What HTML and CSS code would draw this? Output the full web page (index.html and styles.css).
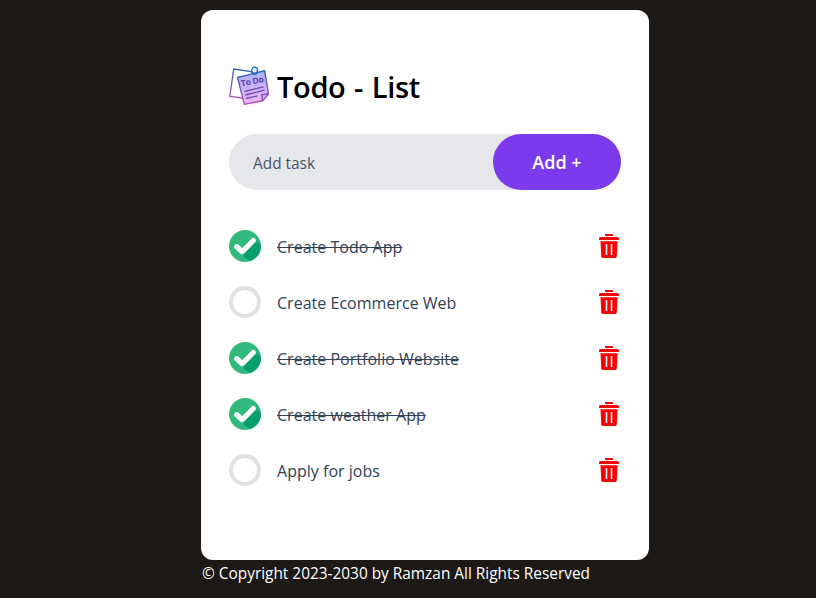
FILE: index.html
```html
<!DOCTYPE html>
<html lang="en">
<head>
<meta charset="utf-8">
<title>Todo - List</title>
<link rel="stylesheet" href="styles.css">
</head>
<body>
<svg class="defs" aria-hidden="true">
  <defs>
    <clipPath id="disc"><circle cx="16" cy="16" r="16"/></clipPath>
    <symbol id="checked" viewBox="0 0 32 32">
      <circle cx="16" cy="16" r="16" fill="#32ba7c"/>
      <path clip-path="url(#disc)" fill="#0aa06e" d="M12.300 23.500 26 9.200 34 17V34H22.500z"/>
      <path d="M7.700 16.700 13.300 21.700 24.300 10.500" fill="none" stroke="#fff" stroke-width="5.200" stroke-linecap="round" stroke-linejoin="round"/>
    </symbol>
    <symbol id="unchecked" viewBox="0 0 32 32">
      <circle cx="16" cy="16" r="14" fill="#fff" stroke="#e1e1e1" stroke-width="4"/>
    </symbol>
    <symbol id="trash" viewBox="0 0 20 26">
      <path fill="#f00" fill-rule="evenodd" d="M6 1h8v2H6zM1.500 4h17q1.500 0 1.500 1.500V7H0V5.500Q0 4 1.500 4zM1.500 8.300h17L17.700 23.800q-.1 1.300-1.600 1.300H3.900q-1.500 0-1.600-1.300zM6.700 11v11h1.600V11zM11.700 11v11h1.600V11z"/>
    </symbol>
  </defs>
</svg>
<main class="card">
  <header class="heading">
    <svg class="logo" viewBox="0 0 40 40">
      <defs>
        <linearGradient id="ink" x1="0" y1="0" x2="0" y2="1"><stop offset="0" stop-color="#2468b2"/><stop offset="1" stop-color="#b84cc0"/></linearGradient>
        <linearGradient id="paper" x1="0" y1="0" x2="0" y2="1"><stop offset="0" stop-color="#a9b0fa"/><stop offset="1" stop-color="#efb5f7"/></linearGradient>
      </defs>
      <path d="M4.800 3 28 6.500 24 34 .8 30.200z" fill="#fff" stroke="url(#ink)" stroke-width="1.300"/>
      <path d="M8.500 11.500 35.600 4.700 39.500 28 33.800 34.700 15.400 38.400z" fill="url(#paper)" stroke="url(#ink)" stroke-width="1.400" stroke-linejoin="round"/>
      <path d="M33.800 34.500 32.700 28.800 39 27.800M15.500 25.500 34.500 20.800M16.200 29 35.500 24.200M17 32.500 28.500 29.800" fill="none" stroke="#7046b4" stroke-width="1.300"/>
      <circle cx="25.600" cy="4.200" r="3" fill="#d5e9ff" stroke="#2468b2" stroke-width="1.200"/>
      <path d="M22.500 6.500q3 3.800 6.200-.2" fill="none" stroke="#2468b2" stroke-width="1.300"/>
      <text x="12.500" y="20.500" transform="rotate(-11 12.500 20.500)" class="logo-text">To Do</text>
    </svg>
    <h1 class="title">Todo - List</h1>
  </header>
  <form class="entry">
    <input class="field" type="text" placeholder="Add task">
    <button class="add" type="button">Add +</button>
  </form>
  <ul class="tasks">
    <li class="task"><svg class="mark"><use href="#checked"/></svg><span class="label done">Create Todo App</span><svg class="bin"><use href="#trash"/></svg></li>
    <li class="task"><svg class="mark"><use href="#unchecked"/></svg><span class="label">Create Ecommerce Web</span><svg class="bin"><use href="#trash"/></svg></li>
    <li class="task"><svg class="mark"><use href="#checked"/></svg><span class="label done">Create Portfolio Website</span><svg class="bin"><use href="#trash"/></svg></li>
    <li class="task"><svg class="mark"><use href="#checked"/></svg><span class="label done">Create weather App</span><svg class="bin"><use href="#trash"/></svg></li>
    <li class="task"><svg class="mark"><use href="#unchecked"/></svg><span class="label">Apply for jobs</span><svg class="bin"><use href="#trash"/></svg></li>
  </ul>
</main>
<footer class="copyright">© Copyright 2023-2030 by Ramzan All Rights Reserved</footer>
</body>
</html>
```
FILE: styles.css
```css
* { box-sizing: border-box; margin: 0; padding: 0; }
body {
  width: 816px;
  height: 598px;
  overflow: hidden;
  background: #1c1917;
  padding: 10px 0 0 201px;
  font-family: "Segoe UI", "Open Sans", "Noto Sans", sans-serif;
  font-size: 16px;
  line-height: 24px;
}
.defs { position: absolute; width: 0; height: 0; }
.card { width: 448px; height: 550px; padding: 56px 28px 0; border-radius: 12px; background: #fff; }
.heading { display: flex; align-items: center; gap: 8px; height: 40px; }
.logo { width: 40px; height: 40px; flex: none; }
.logo-text { font: bold 8.500px "Open Sans", sans-serif; letter-spacing: -0.200px; fill: #5148aa; }
.title { font-size: 29px; line-height: 36px; font-weight: 600; letter-spacing: -0.350px; word-spacing: 1.500px; white-space: nowrap; padding-top: 2px; }
.entry { display: flex; width: 392px; height: 56px; margin: 28px 0; border-radius: 28px; background: #e5e7eb; }
.field { flex: 1; min-width: 0; height: 56px; padding: 2px 8px 0 24px; border: 0; outline: 0; background: transparent; font: 15.400px "Segoe UI", "Open Sans", sans-serif; }
.field::placeholder { color: #475569; opacity: 1; }
.add { width: 128px; height: 56px; border: 0; border-radius: 28px; background: #7c3aed; color: #fff; font: 600 18px "Segoe UI", "Open Sans", sans-serif; }
.tasks { list-style: none; }
.task { display: flex; align-items: center; height: 56px; }
.mark { width: 32px; height: 32px; flex: none; }
.label { flex: none; margin-left: 16px; padding-top: 1px; color: #334155; font-size: 16px; letter-spacing: 0.020px; white-space: nowrap; }
.done { text-decoration: line-through; text-decoration-thickness: 1px; }
.bin { width: 20px; height: 26px; margin-left: auto; margin-right: 2px; flex: none; }
.copyright { padding: 2px 0 0 1px; color: #fff; font-size: 15.400px; white-space: nowrap; }
```
